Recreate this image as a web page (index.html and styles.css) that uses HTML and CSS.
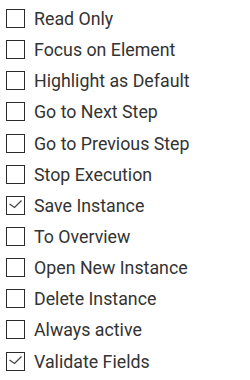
FILE: index.html
```
<!DOCTYPE html>
<html lang="en">
<head>
  <meta charset="UTF-8">
  <title>Options</title>
  <link rel="stylesheet" href="styles.css">
</head>
<body>
  <ul class="options">
    <li class="option"><span class="box"></span>Read Only</li>
    <li class="option"><span class="box"></span>Focus on Element</li>
    <li class="option"><span class="box"></span>Highlight as Default</li>
    <li class="option"><span class="box"></span>Go to Next Step</li>
    <li class="option"><span class="box"></span>Go to Previous Step</li>
    <li class="option"><span class="box"></span>Stop Execution</li>
    <li class="option"><span class="box checked"><svg viewBox="0 0 19 19"><path d="M3.5 9 L8.5 12.5 L15.5 5.5"/></svg></span>Save Instance</li>
    <li class="option"><span class="box"></span>To Overview</li>
    <li class="option"><span class="box"></span>Open New Instance</li>
    <li class="option"><span class="box"></span>Delete Instance</li>
    <li class="option"><span class="box"></span>Always active</li>
    <li class="option"><span class="box checked"><svg viewBox="0 0 19 19"><path d="M3.5 9 L8.5 12.5 L15.5 5.5"/></svg></span>Validate Fields</li>
  </ul>
</body>
</html>
```
FILE: styles.css
```
* {
  box-sizing: border-box;
  margin: 0;
  padding: 0;
}

body {
  font-family: Roboto, 'Liberation Sans', sans-serif;
  background: #fff;
  color: #333;
}

.options {
  list-style: none;
  padding: 3px 0 0 6px;
}

.option {
  display: flex;
  align-items: center;
  height: 31.15px;
  font-size: 17.8px;
}

.box {
  width: 19px;
  height: 19px;
  border: 1.5px solid #2b2b2b;
  margin-right: 9px;
  flex-shrink: 0;
  position: relative;
}

.box svg {
  position: absolute;
  left: -1.5px;
  top: -1.5px;
  width: 19px;
  height: 19px;
}

.box svg path {
  fill: none;
  stroke: #444;
  stroke-width: 1.3;
}
```
